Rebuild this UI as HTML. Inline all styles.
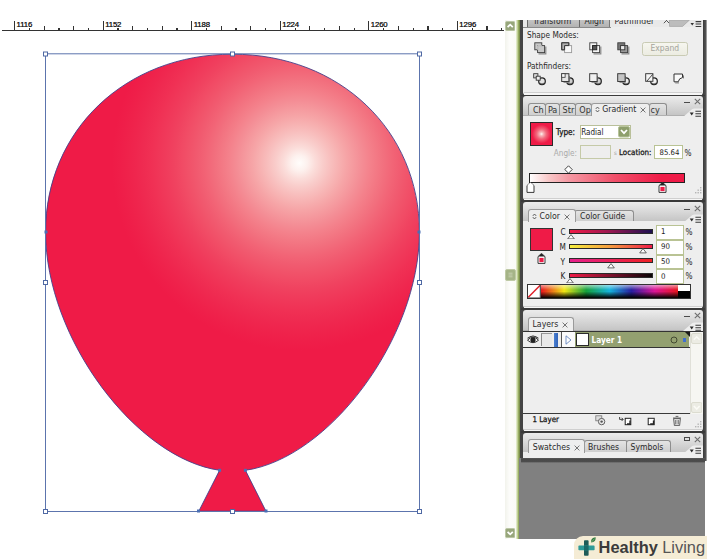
<!DOCTYPE html>
<html><head><meta charset="utf-8"><title>Balloon</title>
<style>
html,body{margin:0;padding:0;background:#fff;}
body{width:707px;height:559px;position:relative;overflow:hidden;font-family:"DejaVu Sans Condensed","Liberation Sans",sans-serif;font-size:8.2px;color:#222;}
.a{position:absolute;}
.t{position:absolute;white-space:nowrap;line-height:10px;}
.b{font-weight:bold;}
.h{color:#161616;-webkit-text-stroke:0.25px #161616;}
.tab{position:absolute;box-sizing:border-box;border:1px solid #8e8e8e;border-bottom:none;border-radius:3px 3px 0 0;background:linear-gradient(#e4e4e4,#cfcfcf);color:#333;font-size:9px;line-height:12px;white-space:nowrap;overflow:hidden;padding-left:3px;}
.tab.on{background:#eeeeee;border-color:#9a9a9a;}
.hdr{position:absolute;left:523px;width:180px;background:linear-gradient(#ececec,#c5c5c5);box-sizing:border-box;border-bottom:1px solid #b0b0b0;}
.body{position:absolute;left:523px;width:180px;background:#eeeeee;}
.dk{position:absolute;left:521px;width:184px;background:#3a3a3a;}
.inp{position:absolute;box-sizing:border-box;border:1px solid #b9c394;background:#fff;}
</style></head><body>

<div class="a" style="left:2px;top:29.8px;width:502px;height:1.4px;background:#333"></div>
<div class="a" style="left:14.10px;top:21.1px;width:1.2px;height:9.8px;background:#333"></div>
<div class="t" style="left:16.60px;top:19.8px;font-family:'Liberation Sans',sans-serif;font-size:7.8px;color:#000;line-height:9px;-webkit-text-stroke:0.22px #000;letter-spacing:-0.15px">1116</div>
<div class="a" style="left:28.86px;top:27.8px;width:1.2px;height:3.1px;background:#333"></div>
<div class="a" style="left:43.62px;top:25.7px;width:1.2px;height:5.2px;background:#333"></div>
<div class="a" style="left:58.37px;top:27.8px;width:1.2px;height:3.1px;background:#333"></div>
<div class="a" style="left:73.13px;top:25.7px;width:1.2px;height:5.2px;background:#333"></div>
<div class="a" style="left:87.89px;top:27.8px;width:1.2px;height:3.1px;background:#333"></div>
<div class="a" style="left:102.65px;top:21.1px;width:1.2px;height:9.8px;background:#333"></div>
<div class="t" style="left:105.15px;top:19.8px;font-family:'Liberation Sans',sans-serif;font-size:7.8px;color:#000;line-height:9px;-webkit-text-stroke:0.22px #000;letter-spacing:-0.15px">1152</div>
<div class="a" style="left:117.41px;top:27.8px;width:1.2px;height:3.1px;background:#333"></div>
<div class="a" style="left:132.17px;top:25.7px;width:1.2px;height:5.2px;background:#333"></div>
<div class="a" style="left:146.92px;top:27.8px;width:1.2px;height:3.1px;background:#333"></div>
<div class="a" style="left:161.68px;top:25.7px;width:1.2px;height:5.2px;background:#333"></div>
<div class="a" style="left:176.44px;top:27.8px;width:1.2px;height:3.1px;background:#333"></div>
<div class="a" style="left:191.20px;top:21.1px;width:1.2px;height:9.8px;background:#333"></div>
<div class="t" style="left:193.70px;top:19.8px;font-family:'Liberation Sans',sans-serif;font-size:7.8px;color:#000;line-height:9px;-webkit-text-stroke:0.22px #000;letter-spacing:-0.15px">1188</div>
<div class="a" style="left:205.96px;top:27.8px;width:1.2px;height:3.1px;background:#333"></div>
<div class="a" style="left:220.72px;top:25.7px;width:1.2px;height:5.2px;background:#333"></div>
<div class="a" style="left:235.47px;top:27.8px;width:1.2px;height:3.1px;background:#333"></div>
<div class="a" style="left:250.23px;top:25.7px;width:1.2px;height:5.2px;background:#333"></div>
<div class="a" style="left:264.99px;top:27.8px;width:1.2px;height:3.1px;background:#333"></div>
<div class="a" style="left:279.75px;top:21.1px;width:1.2px;height:9.8px;background:#333"></div>
<div class="t" style="left:282.25px;top:19.8px;font-family:'Liberation Sans',sans-serif;font-size:7.8px;color:#000;line-height:9px;-webkit-text-stroke:0.22px #000;letter-spacing:-0.15px">1224</div>
<div class="a" style="left:294.51px;top:27.8px;width:1.2px;height:3.1px;background:#333"></div>
<div class="a" style="left:309.27px;top:25.7px;width:1.2px;height:5.2px;background:#333"></div>
<div class="a" style="left:324.02px;top:27.8px;width:1.2px;height:3.1px;background:#333"></div>
<div class="a" style="left:338.78px;top:25.7px;width:1.2px;height:5.2px;background:#333"></div>
<div class="a" style="left:353.54px;top:27.8px;width:1.2px;height:3.1px;background:#333"></div>
<div class="a" style="left:368.30px;top:21.1px;width:1.2px;height:9.8px;background:#333"></div>
<div class="t" style="left:370.80px;top:19.8px;font-family:'Liberation Sans',sans-serif;font-size:7.8px;color:#000;line-height:9px;-webkit-text-stroke:0.22px #000;letter-spacing:-0.15px">1260</div>
<div class="a" style="left:383.06px;top:27.8px;width:1.2px;height:3.1px;background:#333"></div>
<div class="a" style="left:397.82px;top:25.7px;width:1.2px;height:5.2px;background:#333"></div>
<div class="a" style="left:412.57px;top:27.8px;width:1.2px;height:3.1px;background:#333"></div>
<div class="a" style="left:427.33px;top:25.7px;width:1.2px;height:5.2px;background:#333"></div>
<div class="a" style="left:442.09px;top:27.8px;width:1.2px;height:3.1px;background:#333"></div>
<div class="a" style="left:456.85px;top:21.1px;width:1.2px;height:9.8px;background:#333"></div>
<div class="t" style="left:459.35px;top:19.8px;font-family:'Liberation Sans',sans-serif;font-size:7.8px;color:#000;line-height:9px;-webkit-text-stroke:0.22px #000;letter-spacing:-0.15px">1296</div>
<div class="a" style="left:471.61px;top:27.8px;width:1.2px;height:3.1px;background:#333"></div>
<div class="a" style="left:486.37px;top:25.7px;width:1.2px;height:5.2px;background:#333"></div>
<div class="a" style="left:501.12px;top:27.8px;width:1.2px;height:3.1px;background:#333"></div>
<svg class="a" style="left:0;top:0" width="520" height="559" viewBox="0 0 520 559">
<defs>
<radialGradient id="bg" gradientUnits="userSpaceOnUse" cx="299.4" cy="163" r="219.0">
<stop offset="0.0000" stop-color="#fffdfb"/>
<stop offset="0.0357" stop-color="#fdf1ee"/>
<stop offset="0.0714" stop-color="#fbddda"/>
<stop offset="0.1071" stop-color="#f9cdcb"/>
<stop offset="0.1427" stop-color="#f8bfbe"/>
<stop offset="0.1784" stop-color="#f7b2b2"/>
<stop offset="0.2141" stop-color="#f6a5a7"/>
<stop offset="0.2498" stop-color="#f5999e"/>
<stop offset="0.2855" stop-color="#f48d95"/>
<stop offset="0.3212" stop-color="#f4828c"/>
<stop offset="0.3568" stop-color="#f37884"/>
<stop offset="0.3925" stop-color="#f26e7d"/>
<stop offset="0.4282" stop-color="#f26476"/>
<stop offset="0.4639" stop-color="#f15b70"/>
<stop offset="0.4996" stop-color="#f1536a"/>
<stop offset="0.5353" stop-color="#f14b65"/>
<stop offset="0.5709" stop-color="#f04360"/>
<stop offset="0.6066" stop-color="#f03c5c"/>
<stop offset="0.6423" stop-color="#f03658"/>
<stop offset="0.6780" stop-color="#f03054"/>
<stop offset="0.7137" stop-color="#ef2b51"/>
<stop offset="0.7494" stop-color="#ef264e"/>
<stop offset="0.7850" stop-color="#ef224b"/>
<stop offset="0.8207" stop-color="#ef1e49"/>
<stop offset="0.8564" stop-color="#ef1b47"/>
<stop offset="1" stop-color="#ef1b47"/>
</radialGradient>
</defs>
<path d="M232.5,54.2 C339.80,54.2 419.4,130.60 419.4,232 C419.40,338.82 328.27,458.65 245.40,470.28 L266,511.2 L198.8,511.2 L219.60,470.28 C136.73,458.65 45.60,338.82 45.60,232.00 C45.6,130.60 125.20,54.2 232.5,54.2 Z" fill="url(#bg)" stroke="#45408a" stroke-width="0.9"/>
<rect x="45.5" y="53.8" width="374" height="457.7" fill="none" stroke="#5c74ad" stroke-width="1"/>
<g fill="#fff" stroke="#4f69a4" stroke-width="1">
<rect x="43.5" y="52" width="4" height="4"/><rect x="230.5" y="52" width="4" height="4"/><rect x="417.5" y="52" width="4" height="4"/>
<rect x="43.5" y="280.5" width="4" height="4"/><rect x="417.5" y="280.5" width="4" height="4"/>
<rect x="43.5" y="509.5" width="4" height="4"/><rect x="230.5" y="509.5" width="4" height="4"/><rect x="417.5" y="509.5" width="4" height="4"/>
</g>
<g fill="#4a6fb4">
<rect x="44.5" y="230.5" width="3" height="3"/><rect x="417.5" y="230.5" width="3" height="3"/>
<rect x="218.1" y="468.8" width="3" height="3"/><rect x="243.9" y="468.8" width="3" height="3"/>
<rect x="197" y="509.5" width="3" height="3"/><rect x="264.5" y="509.5" width="3" height="3"/>
</g>
</svg>
<div class="a" style="left:505px;top:20px;width:11px;height:519px;background:linear-gradient(90deg,#f2f3ec,#fcfcfa 40%,#fafbf6)"></div>
<svg class="a" style="left:504.8px;top:20.6px" width="10.4" height="10.2" viewBox="0 0 10.4 10.2"><rect x="0.5" y="0.5" width="9.4" height="9.2" rx="1.4" fill="#97a67b" stroke="#bcc7a6"/><path d="M2.6,6.2 L5.2,3.6 L7.8,6.2" fill="none" stroke="#fff" stroke-width="1.7"/></svg>
<svg class="a" style="left:504.8px;top:528.3px" width="10.4" height="10.2" viewBox="0 0 10.4 10.2"><rect x="0.5" y="0.5" width="9.4" height="9.2" rx="1.4" fill="#97a67b" stroke="#bcc7a6"/><path d="M2.6,3.8 L5.2,6.4 L7.8,3.8" fill="none" stroke="#fff" stroke-width="1.7"/></svg>
<svg class="a" style="left:504.5px;top:268.8px" width="11" height="12" viewBox="0 0 11 12"><rect x="0.5" y="0.5" width="10" height="11" rx="1.5" fill="#a5b487" stroke="#bfcaa6"/><path d="M3.5,4.2 H7.5 M3.5,6 H7.5 M3.5,7.8 H7.5" stroke="#c9d3b4" stroke-width="0.9"/></svg>
<div class="a" style="left:516px;top:20px;width:3.6px;height:519px;background:linear-gradient(90deg,#eef3df 0%,#c4d49a 35%,#9bb066 60%,#6c7e3e 100%)"></div>
<div class="a" style="left:519.6px;top:20px;width:186px;height:441px;background:#444"></div>
<div class="a" style="left:519.4px;top:458px;width:185.2px;height:80.7px;background:#808080"></div>
<div class="a" style="left:702.8px;top:20px;width:3.4px;height:441px;background:linear-gradient(90deg,#3a3a3a,#555)"></div>
<div class="a" style="left:706.2px;top:20px;width:0.8px;height:441px;background:#9a9a9a"></div>
<div class="hdr" style="top:20px;height:8px;background:#e9e9e9"></div>
<div class="body" style="top:26.5px;height:68.2px;border-radius:0 0 3px 3px"></div>
<div class="a" style="left:524px;top:92.4px;width:178px;height:0.8px;background:#cfcfcf"></div>
<div class="a" style="left:524px;top:93.2px;width:178px;height:1.4px;background:#f6f6f6"></div>
<div class="dk" style="top:94.6px;height:1.5px"></div>
<div class="hdr" style="top:96.1px;height:20px;border-radius:3px 3px 0 0"></div>
<div class="body" style="top:115.5px;height:84.9px;border-radius:0 0 3px 3px"></div>
<div class="a" style="left:524px;top:198.1px;width:178px;height:0.8px;background:#cfcfcf"></div>
<div class="a" style="left:524px;top:198.9px;width:178px;height:1.4px;background:#f6f6f6"></div>
<div class="dk" style="top:200.3px;height:1.6px"></div>
<div class="hdr" style="top:201.9px;height:20px;border-radius:3px 3px 0 0"></div>
<div class="body" style="top:221px;height:87.3px;border-radius:0 0 3px 3px"></div>
<div class="a" style="left:524px;top:306.0px;width:178px;height:0.8px;background:#cfcfcf"></div>
<div class="a" style="left:524px;top:306.8px;width:178px;height:1.4px;background:#f6f6f6"></div>
<div class="dk" style="top:308.2px;height:1.5px"></div>
<div class="hdr" style="top:309.7px;height:21.5px;border-radius:3px 3px 0 0"></div>
<div class="body" style="top:330.5px;height:100.8px;border-radius:0 0 3px 3px"></div>
<div class="a" style="left:524px;top:429.0px;width:178px;height:0.8px;background:#cfcfcf"></div>
<div class="a" style="left:524px;top:429.8px;width:178px;height:1.4px;background:#f6f6f6"></div>
<div class="dk" style="top:431.2px;height:1.6px"></div>
<div class="hdr" style="top:432.8px;height:20px;border-radius:3px 3px 0 0"></div>
<div class="body" style="top:452.3px;height:6.2px"></div>
<div class="dk" style="top:458.4px;height:5px;width:183.6px;background:linear-gradient(#5c5c5c 0%,#494949 22%,#4c4c4c 72%,#808080 100%)"></div>
<div class="a" style="left:523px;top:20px;width:180px;height:7.6px;overflow:hidden">
<div class="a" style="left:3.5px;top:0;width:53px;height:6.8px;background:linear-gradient(#c4c4c4,#b2b2b2);border-left:1px solid #6a6a6a;border-right:1px solid #6a6a6a;box-sizing:border-box"></div>
<div class="a" style="left:56.5px;top:0;width:30.5px;height:6.8px;background:linear-gradient(#c4c4c4,#b2b2b2);border-right:1px solid #7a7a7a;box-sizing:border-box"></div>
<div class="a" style="left:0;top:6.7px;width:88px;height:0.9px;background:#8a8a8a"></div>
<div class="t" style="left:10px;top:-3.7px;font-size:8.6px;color:#2a2a2a">Transform</div>
<div class="t" style="left:61.5px;top:-3.7px;font-size:8.6px;color:#2a2a2a">Align</div>
<div class="t" style="left:91.5px;top:-3.7px;font-size:8.6px;color:#2a2a2a">Pathfinder</div>
<svg class="a" style="left:139.5px;top:-3.2px" width="7" height="7" viewBox="0 0 7 7"><path d="M0.8,0.8 L6.2,6.2 M6.2,0.8 L0.8,6.2" stroke="#555" stroke-width="1" fill="none"/></svg>
<svg class="a" style="left:146px;top:0" width="22" height="7" viewBox="0 0 22 7"><path d="M0.5,0 L0.5,6.4 L13.5,6.4 L20.5,0 Z" fill="#bdbdbd" stroke="#9a9a9a" stroke-width="0.6"/></svg>
<svg class="a" style="left:167px;top:0" width="14" height="7" viewBox="0 0 14 7"><path d="M0.5,3 L4,3 L2.2,5.4 Z" fill="#333"/><path d="M5.6,1.6 H11.2 M5.6,4 H11.2 M5.6,6.5 H11.2" stroke="#3a3a3a" stroke-width="1.1"/></svg>
</div>
<div class="t" style="left:527px;top:29.9px;color:#2a2a2a">Shape Modes:</div>
<div class="t" style="left:527px;top:60.8px;color:#2a2a2a">Pathfinders:</div>
<svg class="a" style="left:533.5px;top:41.5px" width="13" height="13" viewBox="0 0 13 13"><path d="M4.5,11.8 H11.8 V4.5" fill="none" stroke="#8a8a8a" stroke-width="1.2"/><rect x="0.8" y="0.8" width="7" height="7" fill="#c8c8c8" stroke="#3c3c3c" stroke-width="0.9"/><rect x="3.6" y="3.6" width="7" height="7" fill="#c8c8c8" stroke="#3c3c3c" stroke-width="0.9"/><path d="M3.6,7.8 V3.6 H7.8" stroke="#c8c8c8" stroke-width="1" fill="none"/></svg>
<svg class="a" style="left:561.3px;top:41.5px" width="13" height="13" viewBox="0 0 13 13"><rect x="0.8" y="0.8" width="7" height="7" fill="#b8b8b8" stroke="#3c3c3c" stroke-width="0.9"/><rect x="3.6" y="3.6" width="7" height="7" fill="#f8f8f8" stroke="#9a9a9a" stroke-width="0.9"/><path d="M0.8,7.8 V0.8 H7.8 V3.6 H3.6 V7.8 Z" fill="#b0b0b0" stroke="#333" stroke-width="1"/></svg>
<svg class="a" style="left:589px;top:41.5px" width="13" height="13" viewBox="0 0 13 13"><path d="M4.5,11.8 H11.8 V4.5" fill="none" stroke="#8a8a8a" stroke-width="1.2"/><rect x="0.8" y="0.8" width="7" height="7" fill="#f4f4f4" stroke="#3c3c3c" stroke-width="0.9"/><rect x="3.6" y="3.6" width="7" height="7" fill="#f4f4f4" stroke="#3c3c3c" stroke-width="0.9"/><rect x="3.6" y="3.6" width="4.2" height="4.2" fill="#555" stroke="#222" stroke-width="0.9"/></svg>
<svg class="a" style="left:617px;top:41.5px" width="13" height="13" viewBox="0 0 13 13"><path d="M4.5,11.8 H11.8 V4.5" fill="none" stroke="#8a8a8a" stroke-width="1.2"/><rect x="0.8" y="0.8" width="7" height="7" fill="#777" stroke="#3c3c3c" stroke-width="0.9"/><rect x="3.6" y="3.6" width="7" height="7" fill="#999" stroke="#3c3c3c" stroke-width="0.9"/><rect x="3.6" y="3.6" width="4.2" height="4.2" fill="#e8e8e8" stroke="#333" stroke-width="0.9"/></svg>
<div class="a" style="left:642px;top:41.5px;width:45.5px;height:14px;box-sizing:border-box;border:1px solid #c9cbb4;border-radius:2.5px;background:linear-gradient(#f6f6ef,#ecece2);"></div>
<div class="t" style="left:650.5px;top:43.4px;font-size:8.5px;color:#a4a49c">Expand</div>
<svg class="a" style="left:533.2px;top:73px" width="14" height="13" viewBox="0 0 14 13"><circle cx="9" cy="8.2" r="3.3" fill="#e4e4e4" stroke="#222" stroke-width="1.25"/><path d="M6.6,10 Q9,12 11.4,10" stroke="#555" stroke-width="0.9" fill="none"/><rect x="0.7" y="0.7" width="4.2" height="4.2" fill="#e2e2e2" stroke="#333" stroke-width="0.9"/><rect x="3.2" y="3.2" width="4" height="4" fill="#f0f0f0" stroke="#333" stroke-width="0.9"/></svg>
<svg class="a" style="left:561px;top:73px" width="14" height="13" viewBox="0 0 14 13"><circle cx="9" cy="8.2" r="3.3" fill="#cfcfcf" stroke="#222" stroke-width="1.25"/><path d="M6.6,10 Q9,12 11.4,10" stroke="#555" stroke-width="0.9" fill="none"/><path d="M2.5,9.4 H8.4 V3" fill="none" stroke="#8a8a8a" stroke-width="1"/><rect x="0.7" y="0.7" width="7.2" height="7.8" fill="#e6e6e6" stroke="#333" stroke-width="0.95"/><rect x="0.7" y="0.7" width="3.4" height="3.6" fill="#fafafa" stroke="#333" stroke-width="0.8"/></svg>
<svg class="a" style="left:589.2px;top:73px" width="14" height="13" viewBox="0 0 14 13"><circle cx="9" cy="8.2" r="3.3" fill="#cfcfcf" stroke="#222" stroke-width="1.25"/><path d="M6.6,10 Q9,12 11.4,10" stroke="#555" stroke-width="0.9" fill="none"/><path d="M2.5,9.4 H8.4 V3" fill="none" stroke="#8a8a8a" stroke-width="1"/><rect x="0.7" y="0.7" width="7.4" height="7.8" fill="#f0f0f0" stroke="#333" stroke-width="0.95"/></svg>
<svg class="a" style="left:617.3px;top:73px" width="14" height="13" viewBox="0 0 14 13"><circle cx="9" cy="8.2" r="3.3" fill="#ececec" stroke="#222" stroke-width="1.25"/><path d="M6.6,10 Q9,12 11.4,10" stroke="#555" stroke-width="0.9" fill="none"/><path d="M2.5,9.4 H8.4 V3" fill="none" stroke="#8a8a8a" stroke-width="1"/><rect x="0.7" y="0.7" width="7.4" height="7.8" fill="#c4c4c4" stroke="#333" stroke-width="0.95"/></svg>
<svg class="a" style="left:645px;top:73px" width="14" height="13" viewBox="0 0 14 13"><circle cx="9" cy="8.2" r="3.3" fill="#f2f2f2" stroke="#222" stroke-width="1.25"/><path d="M6.6,10 Q9,12 11.4,10" stroke="#555" stroke-width="0.9" fill="none"/><rect x="0.7" y="0.7" width="7.2" height="7.6" fill="#f6f6f6" stroke="#333" stroke-width="0.95"/><path d="M2,8 L7.6,1.4" stroke="#333" stroke-width="0.9"/></svg>
<svg class="a" style="left:672.8px;top:73px" width="14" height="13" viewBox="0 0 14 13"><path d="M1,1 H9.5 V4.6 Q6,5 5.2,8.8 H1 Z" fill="#fafafa" stroke="#333" stroke-width="1"/><path d="M2.2,9.9 H6 M10.5,2.4 V5.4" stroke="#777" stroke-width="1"/></svg>
<div class="a" style="left:684px;top:102.2px;width:5.5px;height:1.3px;background:#4a4a4a"></div>
<svg class="a" style="left:694px;top:98.1px" width="7" height="7" viewBox="0 0 7 7"><path d="M0.8,0.8 L6.2,6.2 M6.2,0.8 L0.8,6.2" stroke="#6e6e6e" stroke-width="1.1" fill="none"/></svg>
<div class="tab" style="left:527.5px;top:103.3px;width:18.2px;height:12.2px;padding-left:4.4px;">Ch</div>
<div class="tab" style="left:544.7px;top:103.3px;width:15.7px;height:12.2px;padding-left:2.2px;">Pa</div>
<div class="tab" style="left:559.4px;top:103.3px;width:16.3px;height:12.2px;padding-left:2.2px;">Str</div>
<div class="tab" style="left:574.7px;top:103.3px;width:17.3px;height:12.2px;padding-left:3.6px;">Op</div>
<div class="tab" style="left:649px;top:103.3px;width:17.5px;height:12.2px;padding-left:0.5px;">cy</div>
<div class="tab on" style="left:590.5px;top:102.6px;width:59.5px;height:13.9px;"></div>
<svg class="a" style="left:595px;top:106.1px" width="5" height="7" viewBox="0 0 5 7"><path d="M0.8,2.9 L2.5,1 L4.2,2.9 M0.8,4.1 L2.5,6 L4.2,4.1" stroke="#444" stroke-width="0.85" fill="none"/></svg>
<div class="t" style="left:602.3px;top:104px;font-size:8.7px;color:#2a2a2a">Gradient</div>
<svg class="a" style="left:639.5px;top:107.4px" width="6" height="6" viewBox="0 0 6 6"><path d="M0.6,0.6 L5.4,5.4 M5.4,0.6 L0.6,5.4" stroke="#666" stroke-width="0.9" fill="none"/></svg>
<svg class="a" style="left:680px;top:107.2px" width="23" height="10" viewBox="0 0 23 10"><path d="M3,10 L12,2.2 Q13,1.5 14.5,1.5 L23,1.5 L23,10 Z" fill="#eeeeee"/><path d="M9.7,5.5 L13.7,5.5 L11.7,8.5 Z" fill="#2a2a2a"/><path d="M15.4,4.3 H21 M15.4,6.7 H21 M15.4,9.2 H21" stroke="#3a3a3a" stroke-width="1.1"/></svg>
<div class="a" style="left:529.5px;top:122px;width:23.5px;height:23.5px;box-sizing:border-box;border:1.2px solid #2a2a2a;background:radial-gradient(circle at 50% 50%,#fdf6f4 0%,#f7b4b8 12%,#f2687c 32%,#ef1b47 62%)"></div>
<div class="t h" style="left:556px;top:127px;font-size:8.1px">Type:</div>
<div class="inp" style="left:579.5px;top:124.5px;width:51.5px;height:14.5px;border-color:#b9c09a"></div>
<div class="t" style="left:581.2px;top:127.6px;color:#222;font-size:8px">Radial</div>
<svg class="a" style="left:617.5px;top:126px" width="12" height="11.5" viewBox="0 0 12 11.5"><rect x="0.5" y="0.5" width="11" height="10.5" rx="1.5" fill="#8e9f6c" stroke="#b7c39a"/><path d="M3,4 L6,7.2 L9,4" fill="none" stroke="#fff" stroke-width="1.7"/></svg>
<div class="t" style="left:553.8px;top:147.7px;color:#a9a9a9;font-size:8.1px">Angle:</div>
<div class="inp" style="left:579.5px;top:144.6px;width:31px;height:14.8px;background:#eeeeee;border-color:#c5caa8"></div>
<div class="t" style="left:614px;top:147.6px;color:#9a9a9a;font-size:6px">s</div>
<div class="t h" style="left:619px;top:147.7px;font-size:7.9px">Location:</div>
<div class="inp" style="left:654.3px;top:144.6px;width:29px;height:14.8px"></div>
<div class="t" style="left:659.5px;top:147.7px;color:#222;font-size:7.7px">85.64</div>
<div class="t" style="left:684.6px;top:147.7px;color:#222;font-size:8.2px">%</div>
<svg class="a" style="left:564px;top:164.5px" width="9" height="9" viewBox="0 0 9 9"><path d="M4.5,0.8 L8.2,4.5 L4.5,8.2 L0.8,4.5 Z" fill="#fff" stroke="#333" stroke-width="0.9"/></svg>
<div class="a" style="left:529px;top:172.5px;width:156px;height:10px;box-sizing:border-box;border:1.1px solid #222;background:linear-gradient(90deg,#ffffff 0%,#f8c8c8 12%,#f59aa4 24.7%,#f0506a 55%,#ef1b47 85.64%,#ef1b47 100%)"></div>
<svg class="a" style="left:525.5px;top:182.4px" width="9" height="11" viewBox="0 0 9 11"><path d="M4.5,0.4 L8,3.6 L8,10.4 L1,10.4 L1,3.6 Z" fill="#fff" stroke="#222" stroke-width="0.9"/><path d="M4.5,0.6 L7.8,3.6 L1.2,3.6 Z" fill="#fff"/><rect x="2.4" y="4.9" width="4.2" height="4.2" fill="#ffffff"/></svg>
<svg class="a" style="left:657.8px;top:182.4px" width="9" height="11" viewBox="0 0 9 11"><path d="M4.5,0.4 L8,3.6 L8,10.4 L1,10.4 L1,3.6 Z" fill="#fff" stroke="#222" stroke-width="0.9"/><path d="M4.5,0.6 L7.8,3.6 L1.2,3.6 Z" fill="#222"/><rect x="2.4" y="4.9" width="4.2" height="4.2" fill="#ef1b47"/></svg>
<svg class="a" style="left:694px;top:187px" width="8" height="8" viewBox="0 0 8 8"><g fill="#b4b4b4"><rect x="6" y="0" width="1.4" height="1.4"/><rect x="3.5" y="2.5" width="1.4" height="1.4"/><rect x="6" y="2.5" width="1.4" height="1.4"/><rect x="1" y="5" width="1.4" height="1.4"/><rect x="3.5" y="5" width="1.4" height="1.4"/><rect x="6" y="5" width="1.4" height="1.4"/></g></svg>
<div class="a" style="left:684px;top:208.6px;width:5.5px;height:1.3px;background:#4a4a4a"></div>
<svg class="a" style="left:694px;top:204.5px" width="7" height="7" viewBox="0 0 7 7"><path d="M0.8,0.8 L6.2,6.2 M6.2,0.8 L0.8,6.2" stroke="#6e6e6e" stroke-width="1.1" fill="none"/></svg>
<div class="tab" style="left:574px;top:209.6px;width:60.0px;height:11.4px;"></div>
<div class="t" style="left:580px;top:210.8px;font-size:8.6px;color:#2a2a2a">Color Guide</div>
<div class="tab on" style="left:527.5px;top:209px;width:48.0px;height:13.0px;"></div>
<svg class="a" style="left:531.5px;top:212.6px" width="5" height="7" viewBox="0 0 5 7"><path d="M0.8,2.9 L2.5,1 L4.2,2.9 M0.8,4.1 L2.5,6 L4.2,4.1" stroke="#444" stroke-width="0.85" fill="none"/></svg>
<div class="t" style="left:539.5px;top:210.8px;font-size:8.7px;color:#2a2a2a">Color</div>
<svg class="a" style="left:564px;top:213.6px" width="6" height="6" viewBox="0 0 6 6"><path d="M0.6,0.6 L5.4,5.4 M5.4,0.6 L0.6,5.4" stroke="#666" stroke-width="0.9" fill="none"/></svg>
<svg class="a" style="left:680px;top:212.6px" width="23" height="10" viewBox="0 0 23 10"><path d="M3,10 L12,2.2 Q13,1.5 14.5,1.5 L23,1.5 L23,10 Z" fill="#eeeeee"/><path d="M9.7,5.5 L13.7,5.5 L11.7,8.5 Z" fill="#2a2a2a"/><path d="M15.4,4.3 H21 M15.4,6.7 H21 M15.4,9.2 H21" stroke="#3a3a3a" stroke-width="1.1"/></svg>
<div class="a" style="left:529.8px;top:227.8px;width:23.4px;height:23.4px;box-sizing:border-box;border:1.2px solid #333;background:#ef1b47"></div>
<svg class="a" style="left:536.5px;top:253px" width="9" height="11" viewBox="0 0 9 11"><path d="M4.5,0.4 L8,3.6 L8,10.4 L1,10.4 L1,3.6 Z" fill="#fff" stroke="#222" stroke-width="0.9"/><path d="M4.5,0.6 L7.8,3.6 L1.2,3.6 Z" fill="#222"/><rect x="2.4" y="4.9" width="4.2" height="4.2" fill="#ef1b47"/></svg>
<div class="t" style="left:560.5px;top:227.0px;color:#222;font-size:8.2px">C</div>
<div class="a" style="left:569px;top:228.7px;width:83.5px;height:5.2px;box-sizing:border-box;border:1px solid #2a2a2a;background:linear-gradient(90deg,#ef1b47,#a01850 45%,#1c1050)"></div>
<svg class="a" style="left:566.8px;top:233.6px" width="8" height="5.5" viewBox="0 0 8 5.5"><path d="M4,0.6 L7.3,4.9 L0.7,4.9 Z" fill="#fff" stroke="#444" stroke-width="0.8"/></svg>
<div class="inp" style="left:656.2px;top:225.2px;width:28px;height:14.6px"></div>
<div class="t" style="left:661px;top:227.4px;color:#222;font-size:7.8px">1</div>
<div class="t" style="left:685.6px;top:227.2px;color:#222;font-size:8.2px">%</div>
<div class="t" style="left:559.6px;top:241.8px;color:#222;font-size:8.2px">M</div>
<div class="a" style="left:569px;top:243.5px;width:83.5px;height:5.2px;box-sizing:border-box;border:1px solid #2a2a2a;background:linear-gradient(90deg,#f6ee3e,#f59a40 50%,#ef1b47)"></div>
<svg class="a" style="left:639px;top:248.4px" width="8" height="5.5" viewBox="0 0 8 5.5"><path d="M4,0.6 L7.3,4.9 L0.7,4.9 Z" fill="#fff" stroke="#444" stroke-width="0.8"/></svg>
<div class="inp" style="left:656.2px;top:240.0px;width:28px;height:14.6px"></div>
<div class="t" style="left:661px;top:242.2px;color:#222;font-size:7.8px">90</div>
<div class="t" style="left:685.6px;top:242.0px;color:#222;font-size:8.2px">%</div>
<div class="t" style="left:560.5px;top:256.6px;color:#222;font-size:8.2px">Y</div>
<div class="a" style="left:569px;top:258.3px;width:83.5px;height:5.2px;box-sizing:border-box;border:1px solid #2a2a2a;background:linear-gradient(90deg,#e6208c,#ee2024 100%)"></div>
<svg class="a" style="left:606.8px;top:263.2px" width="8" height="5.5" viewBox="0 0 8 5.5"><path d="M4,0.6 L7.3,4.9 L0.7,4.9 Z" fill="#fff" stroke="#444" stroke-width="0.8"/></svg>
<div class="inp" style="left:656.2px;top:254.8px;width:28px;height:14.6px"></div>
<div class="t" style="left:661px;top:257.0px;color:#222;font-size:7.8px">50</div>
<div class="t" style="left:685.6px;top:256.8px;color:#222;font-size:8.2px">%</div>
<div class="t" style="left:560.5px;top:271.2px;color:#222;font-size:8.2px">K</div>
<div class="a" style="left:569px;top:272.9px;width:83.5px;height:5.2px;box-sizing:border-box;border:1px solid #2a2a2a;background:linear-gradient(90deg,#ef1b47,#70102a 55%,#0a0406)"></div>
<svg class="a" style="left:565.5px;top:277.8px" width="8" height="5.5" viewBox="0 0 8 5.5"><path d="M4,0.6 L7.3,4.9 L0.7,4.9 Z" fill="#fff" stroke="#444" stroke-width="0.8"/></svg>
<div class="inp" style="left:656.2px;top:269.4px;width:28px;height:14.6px"></div>
<div class="t" style="left:661px;top:271.6px;color:#222;font-size:7.8px">0</div>
<div class="t" style="left:685.6px;top:271.4px;color:#222;font-size:8.2px">%</div>
<div class="a" style="left:527.3px;top:284px;width:164px;height:14.6px;box-sizing:border-box;border:1px solid #333;background:#000"></div>
<div class="a" style="left:540.8px;top:285px;width:137px;height:12.6px;background:linear-gradient(rgba(255,255,255,.55) 0%,rgba(255,255,255,0) 38%,rgba(0,0,0,0) 50%,rgba(0,0,0,1) 100%),linear-gradient(90deg,#e8141c 0%,#f0e614 17%,#14a03c 33%,#14b4dc 50%,#281ea0 66%,#dc1496 83%,#e8141c 100%)"></div>
<svg class="a" style="left:528.3px;top:285px" width="12.5" height="12.6" viewBox="0 0 12.5 12.6"><rect width="12.5" height="12.6" fill="#fff"/><path d="M0.3,12.3 L12.2,0.3" stroke="#e0202a" stroke-width="1.5"/><path d="M12.2,0 V12.6" stroke="#333" stroke-width="0.7"/></svg>
<div class="a" style="left:677.8px;top:285px;width:12.5px;height:6.3px;background:#fff"></div>
<div class="a" style="left:677.8px;top:291.3px;width:12.5px;height:6.3px;background:#000"></div>
<div class="a" style="left:684px;top:316.2px;width:5.5px;height:1.3px;background:#4a4a4a"></div>
<svg class="a" style="left:694px;top:312.1px" width="7" height="7" viewBox="0 0 7 7"><path d="M0.8,0.8 L6.2,6.2 M6.2,0.8 L0.8,6.2" stroke="#6e6e6e" stroke-width="1.1" fill="none"/></svg>
<div class="tab on" style="left:527.5px;top:317.3px;width:46.0px;height:14.2px;"></div>
<div class="t" style="left:532.5px;top:319.3px;font-size:8.7px;color:#2a2a2a">Layers</div>
<svg class="a" style="left:561.5px;top:322px" width="6" height="6" viewBox="0 0 6 6"><path d="M0.6,0.6 L5.4,5.4 M5.4,0.6 L0.6,5.4" stroke="#666" stroke-width="0.9" fill="none"/></svg>
<svg class="a" style="left:680px;top:321.2px" width="23" height="10" viewBox="0 0 23 10"><path d="M3,10 L12,2.2 Q13,1.5 14.5,1.5 L23,1.5 L23,10 Z" fill="#eeeeee"/><path d="M9.7,5.5 L13.7,5.5 L11.7,8.5 Z" fill="#2a2a2a"/><path d="M15.4,4.3 H21 M15.4,6.7 H21 M15.4,9.2 H21" stroke="#3a3a3a" stroke-width="1.1"/></svg>
<div class="a" style="left:523px;top:330.6px;width:180px;height:1.6px;background:#333"></div>
<div class="a" style="left:523px;top:346.8px;width:166.5px;height:1.4px;background:#333"></div>
<div class="a" style="left:574.8px;top:332px;width:114.5px;height:15px;background:#93a070"></div>
<div class="a" style="left:561.3px;top:332px;width:13.4px;height:15px;background:#fbfbfb;border-left:1px solid #555;box-sizing:border-box"></div>
<div class="a" style="left:541px;top:333.2px;width:11.2px;height:13px;background:#e9e9e9;border-left:1px solid #8a8a8a;border-top:1px solid #999;box-sizing:border-box"></div>
<div class="a" style="left:554.3px;top:333px;width:3.7px;height:13.6px;background:linear-gradient(90deg,#4a80d2,#3464b8)"></div>
<svg class="a" style="left:526.5px;top:335px" width="12" height="10" viewBox="0 0 12 10"><path d="M0.5,5.2 Q6,-0.8 11.5,5.2 Q6,10.2 0.5,5.2 Z" fill="#f4f4f4" stroke="#222" stroke-width="0.9"/><circle cx="6" cy="4.9" r="2.6" fill="#222"/><path d="M0.6,3.3 Q6,-1.4 11.4,3.3" stroke="#222" stroke-width="1.1" fill="none"/></svg>
<svg class="a" style="left:564.5px;top:335.2px" width="8" height="10" viewBox="0 0 8 10"><path d="M1,0.8 L6,5 L1,9.2 Z" fill="#fff" stroke="#5578b8" stroke-width="0.8"/></svg>
<div class="a" style="left:576.2px;top:333px;width:12.8px;height:13.2px;background:#fff;border:1.2px solid #2a2a2a;box-sizing:border-box"></div>
<div class="t b" style="left:591.5px;top:335px;color:#fff;font-size:8.2px">Layer 1</div>
<svg class="a" style="left:669.5px;top:335.8px" width="8" height="8" viewBox="0 0 8 8"><circle cx="4" cy="4" r="3" fill="none" stroke="#3a3f2a" stroke-width="0.9"/></svg>
<div class="a" style="left:682.6px;top:338.4px;width:3.6px;height:3.6px;background:#3f6fd0"></div>
<svg class="a" style="left:684.5px;top:332px" width="5" height="5" viewBox="0 0 5 5"><path d="M0,0 H5 V5 Z" fill="#1a1a1a"/></svg>
<div class="a" style="left:689.5px;top:332px;width:13px;height:81.8px;background:#f6f6f2;border-left:1px solid #e0e0d8;box-sizing:border-box"></div>
<svg class="a" style="left:690.5px;top:333px" width="11.5" height="11" viewBox="0 0 11.5 11"><rect x="0.5" y="0.5" width="10.5" height="10" rx="1.5" fill="#ecece4" stroke="#dcdcd0"/><path d="M2.8,6.8 L5.7,3.8 L8.6,6.8" fill="none" stroke="#fbfbf6" stroke-width="1.6"/></svg>
<svg class="a" style="left:690.5px;top:401.5px" width="11.5" height="11" viewBox="0 0 11.5 11"><rect x="0.5" y="0.5" width="10.5" height="10" rx="1.5" fill="#ecece4" stroke="#dcdcd0"/><path d="M2.8,4 L5.7,7 L8.6,4" fill="none" stroke="#fbfbf6" stroke-width="1.6"/></svg>
<div class="a" style="left:523px;top:412.5px;width:166.5px;height:1.3px;background:#3a3a3a"></div>
<div class="t h" style="left:532.4px;top:415.4px;font-size:7.9px">1 Layer</div>
<svg class="a" style="left:594.5px;top:415.3px" width="11" height="11" viewBox="0 0 11 11"><rect x="0.8" y="0.8" width="6" height="5" fill="#ddd" stroke="#777" stroke-width="0.8"/><circle cx="6.6" cy="6.6" r="3.2" fill="#e8e8e8" stroke="#555" stroke-width="0.9"/><circle cx="6.6" cy="6.6" r="1.2" fill="#555"/></svg>
<svg class="a" style="left:618.5px;top:415.9px" width="13" height="10" viewBox="0 0 13 10"><path d="M0.6,1 V3.4 H4 M2.6,1.8 L4.2,3.4 L2.6,5" fill="none" stroke="#333" stroke-width="0.9"/><rect x="6.2" y="2.3" width="5.6" height="6.4" fill="#fff" stroke="#222" stroke-width="1"/><path d="M8,8 H11 V4.6" stroke="#222" stroke-width="1.3" fill="none"/></svg>
<svg class="a" style="left:646.5px;top:415.9px" width="9" height="10" viewBox="0 0 9 10"><rect x="1.2" y="2.3" width="6" height="6.4" fill="#fff" stroke="#222" stroke-width="1"/><path d="M3.2,8 H6.5 V4.6" stroke="#222" stroke-width="1.3" fill="none"/></svg>
<svg class="a" style="left:671.5px;top:414.9px" width="10" height="11.5" viewBox="0 0 10 11.5"><path d="M1.6,3.6 L2.4,10.6 H7.6 L8.4,3.6 Z" fill="#e4e4e4" stroke="#555" stroke-width="0.9"/><path d="M1,3 H9 M3.6,1.4 H6.4 M3.8,5 V9.4 M6.2,5 V9.4" stroke="#555" stroke-width="0.9" fill="none"/></svg>
<svg class="a" style="left:694px;top:420.5px" width="8" height="8" viewBox="0 0 8 8"><g fill="#b4b4b4"><rect x="6" y="0" width="1.4" height="1.4"/><rect x="3.5" y="2.5" width="1.4" height="1.4"/><rect x="6" y="2.5" width="1.4" height="1.4"/><rect x="1" y="5" width="1.4" height="1.4"/><rect x="3.5" y="5" width="1.4" height="1.4"/><rect x="6" y="5" width="1.4" height="1.4"/></g></svg>
<div class="a" style="left:683.5px;top:436.7px;width:6px;height:4px;box-sizing:border-box;border:1px solid #4a4a4a;border-top-width:1.6px"></div>
<svg class="a" style="left:694px;top:435.7px" width="7" height="7" viewBox="0 0 7 7"><path d="M0.8,0.8 L6.2,6.2 M6.2,0.8 L0.8,6.2" stroke="#6e6e6e" stroke-width="1.1" fill="none"/></svg>
<div class="tab" style="left:583.5px;top:439.8px;width:44.0px;height:12.5px;"></div>
<div class="tab" style="left:626.3px;top:439.8px;width:44.7px;height:12.5px;"></div>
<div class="t" style="left:588px;top:441.9px;font-size:8.6px;color:#2a2a2a">Brushes</div>
<div class="t" style="left:630.5px;top:441.9px;font-size:8.6px;color:#2a2a2a">Symbols</div>
<div class="tab on" style="left:527.5px;top:439.2px;width:57.3px;height:14.1px;"></div>
<div class="t" style="left:532.7px;top:441.9px;font-size:8.7px;color:#2a2a2a">Swatches</div>
<svg class="a" style="left:573.5px;top:444.6px" width="6" height="6" viewBox="0 0 6 6"><path d="M0.6,0.6 L5.4,5.4 M5.4,0.6 L0.6,5.4" stroke="#666" stroke-width="0.9" fill="none"/></svg>
<svg class="a" style="left:680px;top:444.0px" width="23" height="10" viewBox="0 0 23 10"><path d="M3,10 L12,2.2 Q13,1.5 14.5,1.5 L23,1.5 L23,10 Z" fill="#eeeeee"/><path d="M9.7,5.5 L13.7,5.5 L11.7,8.5 Z" fill="#2a2a2a"/><path d="M15.4,4.3 H21 M15.4,6.7 H21 M15.4,9.2 H21" stroke="#3a3a3a" stroke-width="1.1"/></svg>
<div class="a" style="left:574px;top:536px;width:133px;height:23px;background:#f5ecd5;border-radius:9px 0 0 0"></div>
<svg class="a" style="left:576px;top:536px" width="24" height="23" viewBox="0 0 24 23">
<rect x="8" y="4.2" width="4.6" height="15.6" rx="0.8" fill="#1f5c58"/>
<rect x="2.4" y="9.6" width="16.2" height="4.6" rx="0.8" fill="#2f9a98"/>
<rect x="8" y="9.6" width="4.6" height="4.6" fill="#1d6a68"/>
<path d="M15.2,6.4 C14.6,3.4 16.6,1.6 19.6,1.2 C20,4.2 18.2,6.2 15.2,6.4 Z" fill="#2f7a3e"/>
<path d="M15.4,6.2 L18.6,2.6" stroke="#cfe0c0" stroke-width="0.5"/>
</svg>
<div class="t" style="left:598.6px;top:538.2px;font-family:'Liberation Sans',sans-serif;font-size:16.4px;line-height:18px;color:#3b3b3b;letter-spacing:0"><span style="font-weight:bold">Healthy</span><span style="color:#555;margin-left:4.4px">Living</span></div>
</body></html>
